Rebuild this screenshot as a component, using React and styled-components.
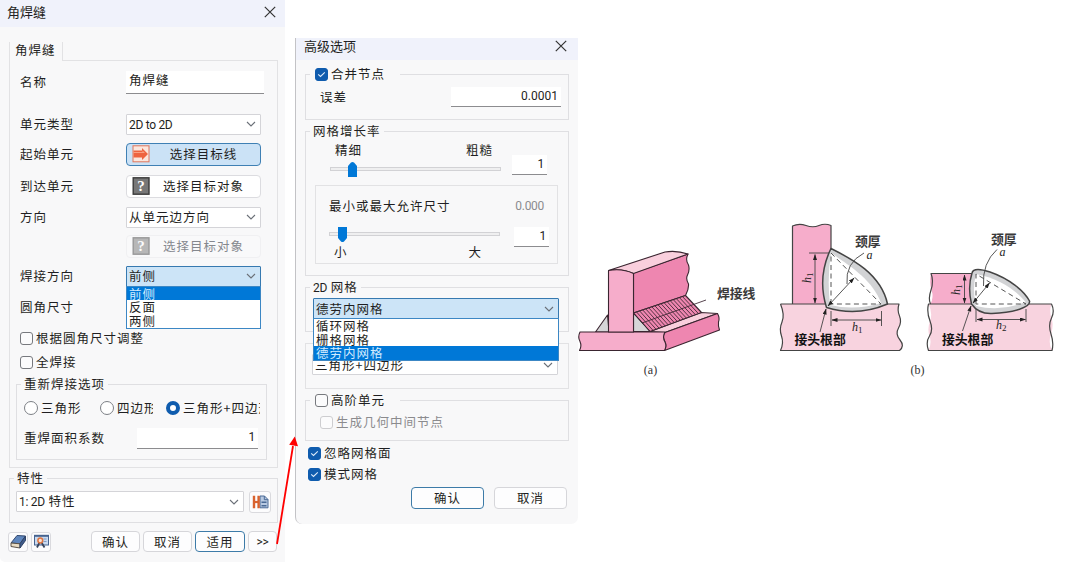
import React from "react";
import styled, { createGlobalStyle, css } from "styled-components";

const App = () => {
  return (
    <>
      <GlobalStyle />
      <Page>
        <WeldPanel />
        <AdvancedDialog />
        <Figures>
          <Figure $width={192}>
            <WeldLineDrawing />
            <figcaption>(a)</figcaption>
          </Figure>
          <Figure $width={286}>
            <ThroatDrawing />
            <figcaption>(b)</figcaption>
          </Figure>
        </Figures>
        <Arrow width="40" height="124" viewBox="265 430 40 124">
          <path d="M277 544L293 446" stroke="#ff0000" strokeWidth="1.8" />
          <path d="M294.8 436.5L289.2 444.8L298 446.2Z" fill="#ff0000" />
        </Arrow>
      </Page>
    </>
  );
};

export default App;

const WeldPanel = () => (
  <Panel>
    <TitleBar>
      角焊缝
      <CloseIcon />
    </TitleBar>
    <PanelBody>
      <Tab>角焊缝</Tab>
      <TabBody>
        <Row $gap={9}>
          <Label>名称</Label>
          <Field $width={138} $height={23} $left>
            角焊缝
          </Field>
        </Row>
        <Row $gap={18}>
          <Label>单元类型</Label>
          <Select width={135}>
            <Latin>2D to 2D</Latin>
          </Select>
        </Row>
        <Row $gap={6}>
          <Label>起始单元</Label>
          <PickButton $active>
            <ArrowIcon />
            <span>选择目标线</span>
          </PickButton>
        </Row>
        <Row $gap={8}>
          <Label>到达单元</Label>
          <PickButton>
            <QuestionIcon />
            <span>选择目标对象</span>
          </PickButton>
        </Row>
        <Row $gap={7}>
          <Label>方向</Label>
          <Select width={135}>从单元边方向</Select>
        </Row>
        <Row $gap={5}>
          <Label />
          <PickButton $disabled>
            <QuestionIcon />
            <span>选择目标对象</span>
          </PickButton>
        </Row>
        <Row $gap={6}>
          <Label>焊接方向</Label>
          <Select
            width={135}
            options={["前侧", "反面", "两侧"]}
            selected="前侧"
          >
            前侧
          </Select>
        </Row>
        <Row $gap={7}>
          <Label>圆角尺寸</Label>
        </Row>
        <Row $gap={7}>
          <Check label="根据圆角尺寸调整" />
        </Row>
        <Row $gap={0}>
          <Check label="全焊接" />
        </Row>
        <RemeshGroup>
          <legend>重新焊接选项</legend>
          <Radios>
            <Radio $clip={46}>
              <i />
              <span>三角形</span>
            </Radio>
            <Radio $clip={36}>
              <i />
              <span>四边形</span>
            </Radio>
            <Radio $checked $clip={77}>
              <i />
              <span>三角形+四边形</span>
            </Radio>
          </Radios>
          <AreaRow>
            <span>重焊面积系数</span>
            <Field $width={121} $height={21}>
              <Latin>1</Latin>
            </Field>
          </AreaRow>
        </RemeshGroup>
      </TabBody>
      <PropertyGroup>
        <legend>特性</legend>
        <PropertyRow>
          <Select width={228}>
            <Latin>1: 2D</Latin> 特性
          </Select>
          <IconButton $size={22}>
            <HbIcon />
          </IconButton>
        </PropertyRow>
      </PropertyGroup>
      <Footer>
        <IconButton $size={20}>
          <EraserIcon />
        </IconButton>
        <IconButton $size={20}>
          <PreviewIcon />
        </IconButton>
        <Spacer />
        <Button $width={49}>确认</Button>
        <Button $width={49}>取消</Button>
        <Button $width={50} $primary>
          适用
        </Button>
        <Button $width={29}>
          <Latin>&gt;&gt;</Latin>
        </Button>
      </Footer>
    </PanelBody>
  </Panel>
);

const AdvancedDialog = () => (
  <Dialog>
    <TitleBar $small>
      高级选项
      <CloseIcon />
    </TitleBar>
    <DialogBody>
      <Group $gap={6} $height={54}>
        <legend>
          <Check label="合并节点" checked />
        </legend>
        <ToleranceRow>
          误差
          <Field $width={110} $height={20}>
            <Latin>0.0001</Latin>
          </Field>
        </ToleranceRow>
      </Group>
      <Group $gap={3} $height={153}>
        <legend>网格增长率</legend>
        <GrowthRow>
          <SliderBlock>
            <Ends>
              <span>精细</span>
              <span>粗糙</span>
            </Ends>
            <Slider at={17} up />
          </SliderBlock>
          <Field $width={35} $height={20}>
            <Latin>1</Latin>
          </Field>
        </GrowthRow>
        <SizeBox>
          <SizeHead>
            最小或最大允许尺寸
            <Latin>0.000</Latin>
          </SizeHead>
          <SizeRow>
            <SliderBlock>
              <Slider at={8} />
              <Ends>
                <span>小</span>
                <span>大</span>
              </Ends>
            </SliderBlock>
            <Field $width={35} $height={20}>
              <Latin>1</Latin>
            </Field>
          </SizeRow>
        </SizeBox>
      </Group>
      <Group $gap={3} $height={53}>
        <legend>
          <Latin>2D</Latin> 网格
        </legend>
        <MeshSelect>
          <Select
            width={246}
            options={["循环网格", "栅格网格", "德劳内网格"]}
            selected="德劳内网格"
          >
            德劳内网格
          </Select>
        </MeshSelect>
      </Group>
      <ShapeBox>
        <Select width={246}>三角形+四边形</Select>
      </ShapeBox>
      <Group $gap={3} $height={49}>
        <legend>
          <Check label="高阶单元" />
        </legend>
        <MidNodeRow>
          <Check label="生成几何中间节点" disabled />
        </MidNodeRow>
      </Group>
      <Checks>
        <Check label="忽略网格面" checked />
        <Check label="模式网格" checked />
      </Checks>
      <DialogFooter>
        <Button $width={73} $height={22} $primary>
          确认
        </Button>
        <Button $width={73} $height={22}>
          取消
        </Button>
      </DialogFooter>
    </DialogBody>
  </Dialog>
);

const Select = ({ width, options, selected, children }) => (
  <SelectWrap $width={width}>
    <SelectBox $open={!!options}>
      <span>{children}</span>
      <svg width="10" height="6" viewBox="0 0 10 6" fill="none">
        <path d="M1 1L5 5L9 1" stroke="#6b7078" strokeWidth="1.1" />
      </svg>
    </SelectBox>
    {options && (
      <List>
        {options.map((option) => (
          <Option key={option} $selected={option === selected}>
            {option}
          </Option>
        ))}
      </List>
    )}
  </SelectWrap>
);

const Check = ({ label, checked, disabled }) => (
  <CheckLabel $disabled={disabled}>
    <CheckBox $checked={checked}>
      {checked && (
        <svg width="9" height="7" viewBox="0 0 9 7" fill="none">
          <path d="M1.2 3.4L3.5 5.5L7.8 1.3" stroke="#dcebfa" strokeWidth="1.1" />
        </svg>
      )}
    </CheckBox>
    {label}
  </CheckLabel>
);

const Slider = ({ at, up }) => (
  <Track>
    <svg style={{ marginLeft: at }} width="9" height="15" viewBox="0 0 9 15">
      <path
        d={
          up
            ? "M0 4L3 .6Q4.5 -.4 6 .6L9 4V15H0Z"
            : "M0 0H9V11L6 14.4Q4.5 15.4 3 14.4L0 11Z"
        }
        fill="#0078d7"
      />
    </svg>
  </Track>
);

const CloseIcon = () => (
  <svg width="12" height="12" viewBox="0 0 12 12" fill="none">
    <path d="M.8 .8L11.2 11.2M11.2 .8L.8 11.2" stroke="#333" strokeWidth="1.2" />
  </svg>
);

const ArrowIcon = () => (
  <svg width="18" height="18" viewBox="0 0 18 18">
    <rect x="1" y=".8" width="16" height="16" fill="#fbe6dd" stroke="#e0765c" />
    <path d="M1.5 5.5H10V3L16 9L10 15V12.5H1.5Z" fill="#ee6440" />
    <path d="M1.5 7H10.5V5.5L13 8H1.5Z" fill="#f9a184" />
  </svg>
);

const QuestionIcon = () => (
  <svg width="18" height="18" viewBox="0 0 18 18">
    <rect x="1.2" y=".8" width="15.8" height="16.4" fill="#777" stroke="#3a3a3a" strokeWidth="1.4" />
    <text
      x="9"
      y="14.3"
      textAnchor="middle"
      fontFamily="Liberation Serif, serif"
      fontWeight="700"
      fontSize="15"
      letterSpacing="0"
      fill="#fff"
    >
      ?
    </text>
  </svg>
);

const HbIcon = () => (
  <svg width="17" height="14" viewBox="0 0 17 14">
    <path d="M8 1H12.5L16 4.5V12.8H8Z" fill="#b9cae2" stroke="#4a6a96" />
    <path d="M9.5 6.5H14.5V8H9.500ZM9.5 10H14.5V11.500H9.5Z" fill="#4a6a96" />
    <path d="M12.300 1V4.700H16" fill="none" stroke="#4a6a96" />
    <path d="M2 .8V13.2M6.600 .8V13.2" stroke="#d9622e" strokeWidth="2.400" />
    <path d="M2 7H6.600" stroke="#d9622e" strokeWidth="2.200" />
  </svg>
);

const EraserIcon = () => (
  <svg width="17" height="15" viewBox="0 0 17 15" strokeLinejoin="round">
    <path d="M1 9L7 1.500L15.500 2L10 9.800Z" fill="#5f86bd" stroke="#33496f" />
    <path d="M1 9L10 9.800V14L1 12.500Z" fill="#e9dcc4" stroke="#5b5248" />
    <path d="M10 9.800L15.500 2V6.500L10 14Z" fill="#3f5c8c" stroke="#2f4264" />
  </svg>
);

const PreviewIcon = () => (
  <svg width="17" height="15" viewBox="0 0 17 15">
    <rect x="1.500" y="1.500" width="14" height="9.500" fill="#c9daf0" stroke="#46638f" />
    <path d="M1 1.800H16" stroke="#46638f" strokeWidth="2" />
    <path d="M10.500 5H13.500M10.500 7.500H13.500" stroke="#7f9bc6" />
    <path d="M6.500 8.500L4 13.500M8.500 8.500L11.500 13.500" stroke="#37455e" strokeWidth="1.800" />
    <circle cx="7.300" cy="6.500" r="2.400" fill="#fbe1d0" stroke="#de7440" strokeWidth="1.500" />
  </svg>
);

const HATCHES = Array.from({ length: 17 }, (_, i) => i / 17);

const WeldLineDrawing = () => (
  <svg width="192" height="120" viewBox="576 236 192 120" strokeLinejoin="round">
    <g stroke="#3a2530" strokeWidth="1.1">
      <path d="M607.5 315L595.5 332H633.5V313L651 331.5H609Z" fill="#d6d6d8" />
      <path d="M650 331.5L701 312.5L717.5 313.5L665 332.5Z" fill="#f9cfdd" />
      <path
        d="M665 332.5L717.5 313.5Q720 318 718.5 322Q718 326 719.5 330L664.5 350.5Q667 346 665 342Q662 337 665 332.5Z"
        fill="#ee86b0"
      />
      <path
        d="M580 332H665Q662 337 665 342Q667 346 664.5 350.5H579.5Q582 346 580 341.5Q577.5 337 580 332Z"
        fill="#f6adcb"
      />
      <path
        d="M633.5 273L688 254Q685 260 688.5 265Q690 270 687.5 275Q685.5 279 688.5 284Q689 289 685.5 295.5L633.5 313Z"
        fill="#ee86b0"
      />
      <path
        d="M608.5 270.5L665 252Q676 250 688 254L633.5 273.5Q622 268 608.5 270.5Z"
        fill="#f9cfdd"
      />
      <path d="M608.5 270.5Q622 268 633.5 273.5V332H608.5Z" fill="#f6adcb" />
      <path d="M633.5 313L685.5 295.5L701.5 312.5L650 331.5Z" fill="#ee86b0" />
    </g>
    <g stroke="#3a2530" strokeWidth="0.85">
      {HATCHES.map((t) => (
        <path
          key={t}
          d={`M${633.5 + 52 * t} ${313 - 17.5 * t}L${650 + 51.5 * t} ${331.5 - 19 * t}`}
        />
      ))}
      <path d="M642 323L706 300" />
    </g>
    <DrawingLabel x="717" y="297.5">
      焊接线
    </DrawingLabel>
  </svg>
);

const ThroatDrawing = () => (
  <svg width="286" height="140" viewBox="776 216 286 140" strokeLinejoin="round" fill="none">
    <defs>
      <marker
        id="tip"
        markerWidth="6"
        markerHeight="5"
        refX="5.5"
        refY="2"
        orient="auto-start-reverse"
        markerUnits="userSpaceOnUse"
      >
        <path d="M0 0L6 2L0 4Z" fill="#222" />
      </marker>
    </defs>

    <path d="M792.5 304V226Q799 223 806 225.5T819 225.5T831 225.5V304Z" fill="#f6adcb" />
    <path
      d="M780.5 304H899Q897 310 899.5 316T898.5 328T900 340T899.5 350.5H780.5Q784 343 781.5 336T782 322T780.5 304Z"
      fill="#f8d3df"
    />
    <g stroke="#444" strokeWidth="1.2">
      <path d="M780.5 304H827M887 304H899Q897 310 899.5 316T898.5 328T900 340T899.5 350.5H780.5Q784 343 781.5 336T782 322T780.5 304" />
      <path d="M792.5 304V226Q799 223 806 225.5T819 225.5T831 225.5V249" />
      <path
        d="M831 248.5C852 259 881 274 887.5 304Q857 317 826.5 307.5Q817 277 831 248.5Z"
        fill="#d2d3d5"
        strokeWidth="1.5"
      />
    </g>
    <path d="M831 253C852 267 873 281 881 303Q855 311 830 305Q827 278 831 253Z" fill="#fff" />
    <path d="M831 304V253L881 304Z" stroke="#555" strokeDasharray="5 3.5" />
    <g stroke="#444" strokeWidth="0.9">
      <path d="M809 253H829M831 311V326M881.5 311V326" />
      <path d="M815 254.5V303" markerStart="url(#tip)" markerEnd="url(#tip)" />
      <path d="M832 320H881" markerStart="url(#tip)" markerEnd="url(#tip)" />
      <path d="M828 306L854 278" markerStart="url(#tip)" markerEnd="url(#tip)" />
      <path d="M820 332L826 309" markerEnd="url(#tip)" />
      <path d="M864 253Q845 263 847 284" />
    </g>
    <Variable transform="translate(810.5 283) rotate(-90)">
      h<tspan dy="2" className="sub">1</tspan>
    </Variable>
    <Variable x="852" y="331">
      h<tspan dy="2" className="sub">1</tspan>
    </Variable>
    <Variable x="866.5" y="259">
      a
    </Variable>
    <DrawingLabel x="855" y="245.5">
      颈厚
    </DrawingLabel>
    <DrawingLabel x="794.5" y="343.5" $dark>
      接头根部
    </DrawingLabel>

    <path d="M931 273.5H974V304H930.5Q934 297 931.5 290T931 273.5Z" fill="#f6adcb" />
    <path
      d="M928.5 304H1051.5Q1049 311 1051.5 318T1051 334T1052 350.5H928.5Q932 343 929.5 336T930 321T928.5 304Z"
      fill="#f8d3df"
    />
    <g stroke="#444" strokeWidth="1.2">
      <path d="M973 273.5H931Q934 281 931 290T930.5 304" />
      <path d="M972 304H928.5Q926.5 312 930 321T929.5 336T928.5 350.5H1052Q1054 343 1051 334T1051.5 318T1051.5 304H1029" />
      <path
        d="M972 273C973 268 981 269 990 272C1010 279 1024 291 1029.5 301C1031 307 1014 313 992 313.5C981 314 975 309 971.5 304Q967.5 287 972 273Z"
        fill="#d2d3d5"
        strokeWidth="1.5"
      />
    </g>
    <path d="M976 274C999 278 1018 292 1025.5 302Q1001 312 976 306Q972 289 976 274Z" fill="#fff" />
    <path d="M976 304V274L1026 304Z" stroke="#555" strokeDasharray="5 3.5" />
    <g stroke="#444" strokeWidth="0.9">
      <path d="M976 309V322M1026 309V322" />
      <path d="M964.5 275V303" markerStart="url(#tip)" markerEnd="url(#tip)" />
      <path d="M977 319.5H1025.5" markerStart="url(#tip)" markerEnd="url(#tip)" />
      <path d="M973 303L989.5 283" markerStart="url(#tip)" markerEnd="url(#tip)" />
      <path d="M962.5 331L971 306" markerEnd="url(#tip)" />
      <path d="M997 249.5Q982 263 983.5 286" />
    </g>
    <Variable transform="translate(959.5 295) rotate(-90)">
      h<tspan dy="2" className="sub">1</tspan>
    </Variable>
    <Variable x="996" y="329">
      h<tspan dy="2" className="sub">2</tspan>
    </Variable>
    <Variable x="999.5" y="256">
      a
    </Variable>
    <DrawingLabel x="991" y="243.5">
      颈厚
    </DrawingLabel>
    <DrawingLabel x="942" y="343.5" $dark>
      接头根部
    </DrawingLabel>
  </svg>
);

const GlobalStyle = createGlobalStyle`
  * {
    box-sizing: border-box;
  }
  body {
    margin: 0;
    background: #fff;
    color: #1f1f22;
    font-family: "Noto Sans CJK SC", "Liberation Sans", sans-serif;
    font-size: 12.5px;
    line-height: 16px;
    letter-spacing: 1px;
    white-space: nowrap;
  }
  svg {
    display: block;
    flex-shrink: 0;
  }
`;

const Page = styled.main`
  position: relative;
  width: 1080px;
  height: 562px;
  display: flex;
  align-items: flex-start;
  overflow: hidden;
`;

const Panel = styled.section`
  width: 285px;
  height: 562px;
  background: #f8f8f9;
  border-bottom-left-radius: 5px;
`;

const Dialog = styled.section`
  width: 283px;
  height: 486px;
  margin: 38px 0 0 10px;
  background: #f8f8f9;
  border-left: 1px solid #c3c3c6;
  border-radius: 0 0 7px 7px;
`;

const TitleBar = styled.header`
  display: flex;
  align-items: center;
  justify-content: space-between;
  height: 27px;
  padding: 0 9px 3px 7px;
  background: #f0f2fb;
  font-size: 13px;
  letter-spacing: 0;
  ${({ $small }) =>
    $small &&
    css`
      height: 22px;
      padding: 0 11px 6px 8px;
    `}
`;

const PanelBody = styled.div`
  padding: 15px 7px 0 9px;
`;

const DialogBody = styled.div`
  padding: 0 9px;
`;

const Tab = styled.div`
  width: 54px;
  height: 19px;
  margin-bottom: -1px;
  position: relative;
  padding-left: 5px;
  background: #f8f8f9;
  border-left: 1px solid #e2e2e4;
  border-right: 1px solid #e2e2e4;
`;

const TabBody = styled.div`
  height: 408px;
  border: 1px solid #e2e2e4;
`;

const Row = styled.div`
  display: flex;
  align-items: center;
  height: 24px;
  margin-top: ${({ $gap }) => $gap}px;
  padding-left: 10px;
`;

const Label = styled.span`
  width: 106px;
`;

const Latin = styled.span`
  font-family: Roboto, "Liberation Sans", sans-serif;
  font-size: 12px;
  letter-spacing: -0.3px;
`;

const Field = styled.div`
  display: flex;
  align-items: center;
  justify-content: ${({ $left }) => ($left ? "flex-start" : "flex-end")};
  width: ${({ $width }) => $width}px;
  height: ${({ $height }) => $height}px;
  padding: 0 3px ${({ $left }) => ($left ? 4 : 2)}px;
  background: #fff;
  border-bottom: 1px solid #8c8c8f;
`;

const SelectWrap = styled.div`
  position: relative;
  width: ${({ $width }) => $width}px;
`;

const SelectBox = styled.div`
  display: flex;
  align-items: center;
  justify-content: space-between;
  height: 21px;
  padding: 0 4px 0 2px;
  background: #fff;
  border: 1px solid #d4d4d8;
  border-radius: 1px;
  ${({ $open }) =>
    $open &&
    css`
      background: #cce4f7;
      border-color: #3679b0;
    `}
`;

const List = styled.ul`
  position: absolute;
  z-index: 1;
  top: 20px;
  left: 0;
  right: 0;
  margin: 0;
  padding: 0;
  list-style: none;
  background: #fff;
  border: 1px solid #3c87c4;
`;

const Option = styled.li`
  height: 13.7px;
  padding-left: 2px;
  line-height: 13.7px;
  ${({ $selected }) =>
    $selected &&
    css`
      background: #0078d7;
      color: #d3ecff;
    `}
`;

const PickButton = styled.div`
  display: flex;
  align-items: center;
  width: 135px;
  height: 23px;
  padding-left: 5px;
  background: #fff;
  border: 1px solid #dcdce0;
  border-radius: 4px;
  span {
    flex: 1;
    text-align: center;
    padding-right: 3px;
  }
  ${({ $active }) =>
    $active &&
    css`
      background: #cbe2f6;
      border-color: #3f80b4;
    `}
  ${({ $disabled }) =>
    $disabled &&
    css`
      background: #f9f9fa;
      border-color: #f0f0f2;
      color: #85888e;
      svg {
        opacity: 0.5;
      }
    `}
`;

const CheckLabel = styled.span`
  display: flex;
  align-items: center;
  gap: 3px;
  ${({ $disabled }) =>
    $disabled &&
    css`
      color: #8b8b8e;
      i {
        border-color: #cdcdd0;
      }
    `}
`;

const CheckBox = styled.i`
  display: flex;
  align-items: center;
  justify-content: center;
  width: 13px;
  height: 13px;
  background: ${({ $checked }) => ($checked ? "#0f5cae" : "#fbfbfc")};
  border: 1px solid ${({ $checked }) => ($checked ? "#0f5cae" : "#77797e")};
  border-radius: 3px;
`;

const Group = styled.fieldset`
  min-width: 0;
  width: 264px;
  height: ${({ $height }) => $height}px;
  margin: ${({ $gap }) => $gap}px 0 0;
  padding: 0;
  border: 1px solid #dfdfe2;
  legend {
    height: 16px;
    margin-left: 4px;
    padding: 0 3px;
  }
  legend > ${CheckLabel} {
    padding: 0 12px 0 2px;
  }
`;

const RemeshGroup = styled(Group).attrs({ $gap: 2, $height: 84 })`
  width: 251px;
  margin-left: 6px;
`;

const PropertyGroup = styled(Group).attrs({ $gap: 2, $height: 53 })`
  width: 269px;
`;

const Radios = styled.div`
  display: flex;
  justify-content: space-between;
  align-items: center;
  height: 24px;
  margin-top: 4px;
  padding: 0 6px 0 7px;
`;

const Radio = styled.span`
  display: flex;
  align-items: center;
  gap: 3px;
  i {
    width: 14px;
    height: 14px;
    border-radius: 50%;
    background: #fff;
    border: ${({ $checked }) => ($checked ? "4.5px solid #0f5cae" : "1px solid #7d8086")};
  }
  span {
    overflow: hidden;
    width: ${({ $clip }) => $clip}px;
  }
`;

const AreaRow = styled.div`
  display: flex;
  align-items: center;
  justify-content: space-between;
  height: 24px;
  margin-top: 6px;
  padding: 0 8px 0 7px;
`;

const PropertyRow = styled.div`
  display: flex;
  gap: 5px;
  margin-top: 5px;
  padding-left: 6px;
`;

const IconButton = styled.div`
  display: flex;
  align-items: center;
  justify-content: center;
  width: ${({ $size }) => $size}px;
  height: ${({ $size }) => $size}px;
  background: #fcfcfd;
  border: 1px solid #dadade;
  border-radius: 3px;
`;

const Footer = styled.footer`
  display: flex;
  align-items: center;
  gap: 3px;
  margin: 8px 1px 0 -1px;
`;

const Spacer = styled.div`
  flex: 1;
`;

const Button = styled.div`
  display: flex;
  align-items: center;
  justify-content: center;
  width: ${({ $width }) => $width}px;
  height: ${({ $height }) => $height || 21}px;
  background: #fdfdfe;
  border: 1px solid ${({ $primary }) => ($primary ? "#3d7ba8" : "#d6d6da")};
  border-radius: 4px;
`;

const ToleranceRow = styled.div`
  display: flex;
  align-items: center;
  justify-content: space-between;
  height: 24px;
  margin-top: 3px;
  padding: 0 7px 0 14px;
  ${Latin} {
    padding-top: 1px;
    letter-spacing: 0;
  }
`;

const SliderBlock = styled.div`
  width: 171px;
`;

const Ends = styled.div`
  display: flex;
  justify-content: space-between;
  padding: 0 8px 0 5px;
`;

const Track = styled.div`
  display: flex;
  align-items: center;
  height: 4px;
  margin: 8px 0;
  background: #efeff0;
  border: 1px solid #d2d2d5;
`;

const GrowthRow = styled.div`
  display: flex;
  align-items: flex-end;
  gap: 11px;
  height: 33px;
  margin-top: 3px;
  padding-left: 24px;
  ${SliderBlock} {
    height: 33px;
  }
  ${Track} {
    margin-top: 9px;
  }
`;

const SizeBox = styled.div`
  width: 243px;
  height: 79px;
  margin: 10px 0 0 9px;
  padding: 12px 8px 0 13px;
  border: 1px solid #e2e2e4;
`;

const SizeHead = styled.div`
  display: flex;
  justify-content: space-between;
  padding-right: 5px;
  ${Latin} {
    color: #8b8b8e;
  }
`;

const SizeRow = styled.div`
  display: flex;
  align-items: flex-start;
  justify-content: space-between;
  margin-top: 10px;
  ${Field} {
    margin-top: 3px;
  }
  ${Ends} {
    padding-right: 18px;
  }
`;

const MeshSelect = styled.div`
  margin: 3px 0 0 7px;
`;

const ShapeBox = styled.div`
  width: 264px;
  height: 46px;
  margin-top: 11px;
  padding: 10px 0 0 6px;
  border: 1px solid #e2e2e4;
`;

const MidNodeRow = styled.div`
  margin: 6px 0 0 14px;
`;

const Checks = styled.div`
  display: flex;
  flex-direction: column;
  gap: 5px;
  padding: 4px 0 0 3px;
`;

const DialogFooter = styled.footer`
  display: flex;
  justify-content: flex-end;
  gap: 10px;
  margin: 5px 2px 0 0;
`;

const Figures = styled.div`
  display: flex;
  gap: 8px;
  align-items: flex-end;
  height: 378px;
  margin-left: -2px;
`;

const Figure = styled.figure`
  width: ${({ $width }) => $width}px;
  margin: 0;
  figcaption {
    margin-top: 6px;
    padding-right: ${({ $width }) => ($width === 192 ? 43 : 3)}px;
    text-align: center;
    font-family: "Liberation Serif", serif;
    font-size: 12px;
    letter-spacing: 0;
    color: #333;
  }
`;

const DrawingLabel = styled.text`
  font-family: "Noto Sans CJK SC", sans-serif;
  font-weight: 700;
  font-size: 12.8px;
  letter-spacing: 0;
  fill: ${({ $dark }) => ($dark ? "#111" : "#3a3a3a")};
`;

const Variable = styled.text`
  font-family: "Liberation Serif", serif;
  font-style: italic;
  font-size: 12px;
  letter-spacing: 0;
  fill: #222;
  .sub {
    font-size: 9px;
    font-style: normal;
  }
`;

const Arrow = styled.svg`
  position: absolute;
  z-index: 2;
  left: 265px;
  top: 430px;
`;
